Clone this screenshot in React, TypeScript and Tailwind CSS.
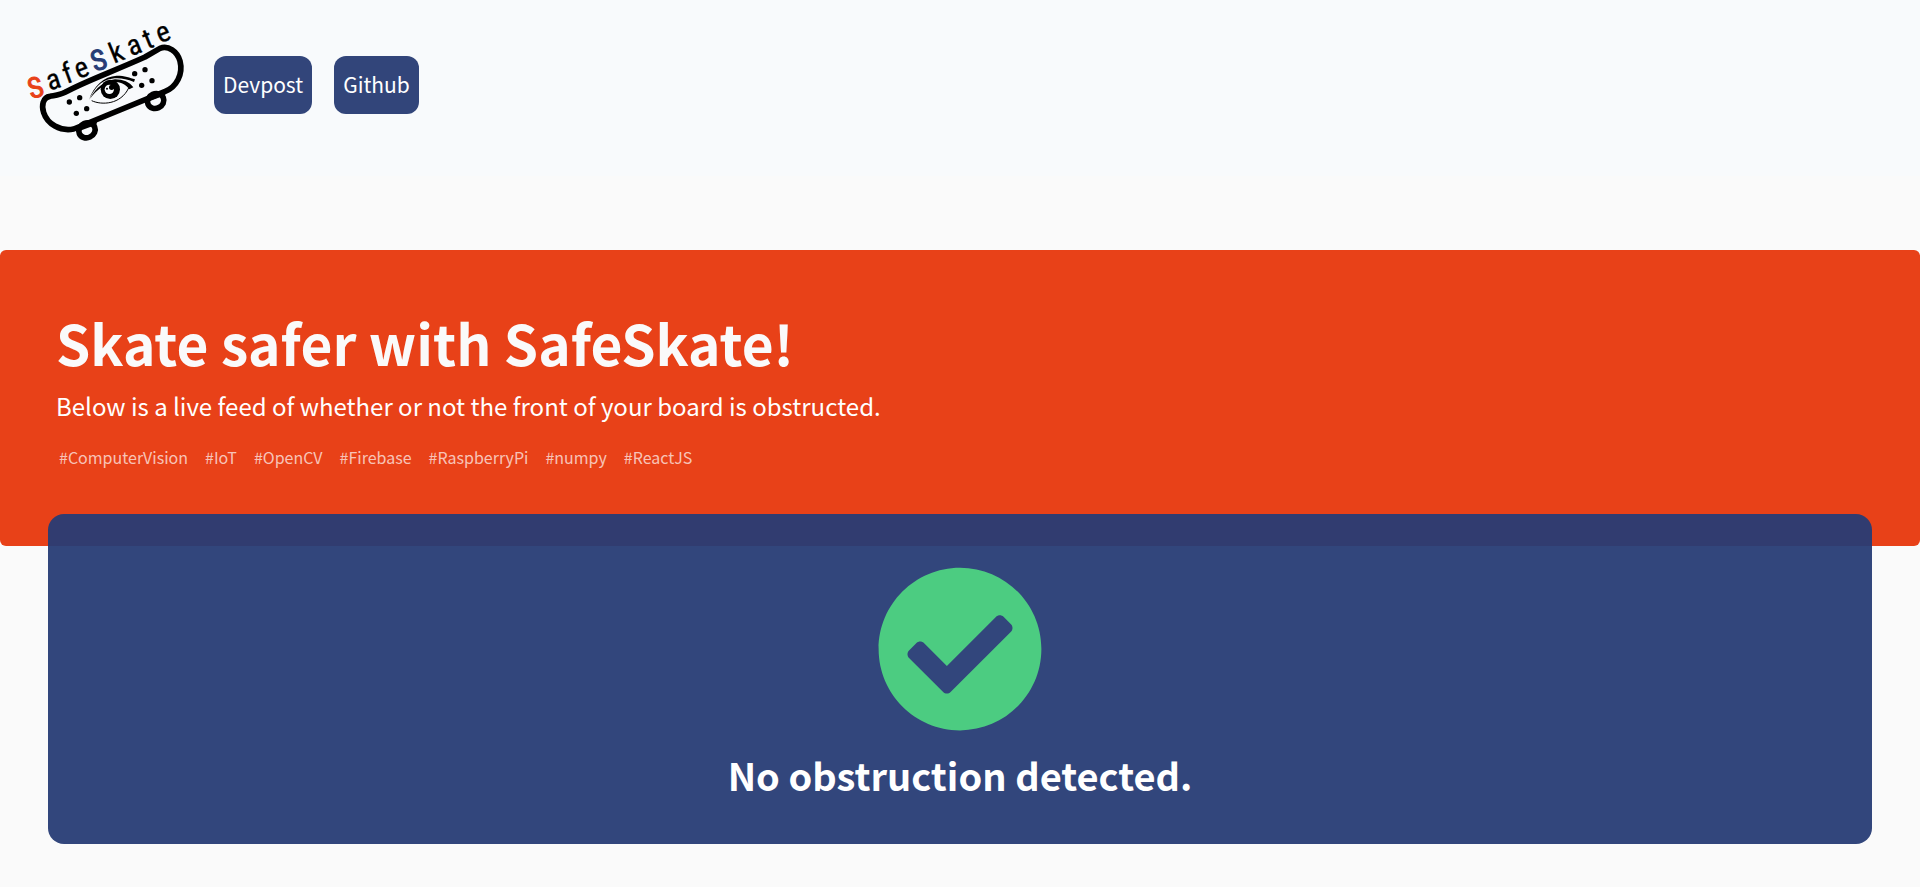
import { FaCheckCircle } from 'react-icons/fa';

const tags = ['#ComputerVision', '#IoT', '#OpenCV', '#Firebase', '#RaspberryPi', '#numpy', '#ReactJS'];

const letters = [
  { c: 'S', x: 115, y: 291, r: -17, f: '#e84118', w: 3 },
  { c: 'a', x: 168, y: 266, r: -18, f: '#000', w: 1 },
  { c: 'f', x: 212, y: 247, r: -20, f: '#000', w: 1 },
  { c: 'e', x: 254, y: 230, r: -22, f: '#000', w: 1 },
  { c: 'S', x: 306, y: 208, r: -20, f: '#273c75', w: 3 },
  { c: 'k', x: 360, y: 184, r: -22, f: '#000', w: 1 },
  { c: 'a', x: 412, y: 162, r: -22, f: '#000', w: 1 },
  { c: 't', x: 454, y: 144, r: -22, f: '#000', w: 1 },
  { c: 'e', x: 499, y: 123, r: -22, f: '#000', w: 1 },
];

const bolts = [
  [208, 306], [239, 293], [260, 326], [229, 340],
  [404, 221], [435, 209], [456, 242], [425, 256],
];

function Logo() {
  return (
    <svg viewBox="0 0 660 480" className="h-40 w-[220px]" role="img" aria-label="SafeSkate">
      {letters.map((l, i) => (
        <text
          key={i}
          transform={`translate(${l.x} ${l.y}) rotate(${l.r})`}
          fontSize="86"
          fill={l.f}
          stroke={l.f}
          strokeWidth={l.w}
          textAnchor="middle"
          className="font-['Liberation_Sans_Narrow','Roboto_Condensed','DejaVu_Sans_Condensed',sans-serif]"
        >
          {l.c}
        </text>
      ))}
      <g fill="none" stroke="#000" strokeWidth="17" strokeLinejoin="round" strokeLinecap="round">
        <path d="M150 289C128 292 124 318 131 338C142 372 180 395 221 387L494 275C530 262 550 222 540 183C532 155 505 135 480 145L435 171C340 214 250 246 195 277C180 285 165 286 150 289Z" />
        <ellipse cx="261" cy="391" rx="25" ry="22" transform="rotate(-24 261 391)" />
        <ellipse cx="467" cy="303" rx="25" ry="22" transform="rotate(-24 467 303)" />
      </g>
      <path d="M226 388L292 362L289 374L236 394ZM434 302L497 276L495 286L442 306Z" />
      {bolts.map(([x, y]) => (
        <circle key={`${x}-${y}`} cx={x} cy={y} r="8" />
      ))}
      <path d="M267 300C280 258 312 229 350 227C375 227 390 233 405 238L402 246C370 233 345 232 320 240C295 250 278 275 267 300Z" />
      <path d="M270 296C288 262 315 242 345 238C370 238 389 246 400 262L388 268C377 252 362 246 345 246C315 250 290 270 270 296Z" />
      <path d="M275 302C305 316 362 314 386 264" fill="none" stroke="#000" strokeWidth="3" />
      <circle cx="331" cy="268" r="29" />
      <circle cx="328" cy="268" r="14" fill="#f8fafc" />
      <circle cx="335" cy="262" r="8" />
      <circle cx="321" cy="266" r="3" />
    </svg>
  );
}

export default function App() {
  return (
    <div className="min-h-screen bg-[#fafafa] font-['Noto_Sans_CJK_JP',sans-serif] text-white">
      <header className="flex h-[176px] items-start bg-[#f8fafc]">
        <a href="#home" className="shrink-0"><Logo /></a>
        <nav className="mt-14 -ml-1.5 flex gap-[22px] text-[21px]">
          <a href="#devpost" className="flex h-[58px] items-center rounded-xl bg-[#32457a] px-[9px]">Devpost</a>
          <a href="#github" className="flex h-[58px] items-center rounded-xl bg-[#32457a] px-[9px]">Github</a>
        </nav>
      </header>
      <main className="pt-[74px] pb-11">
        <section className="rounded-md bg-[#e84118] px-14 pt-[57px] pb-[77px]">
          <h1 className="text-[55px] leading-[70px] font-semibold text-[#fafafa]">Skate safer with SafeSkate!</h1>
          <p className="mt-2 text-2xl leading-[42px]">Below is a live feed of whether or not the front of your board is obstructed.</p>
          <ul className="mt-[18px] flex flex-wrap gap-x-[17px] px-[3px] text-base leading-6 text-white/70">
            {tags.map((t) => <li key={t}>{t}</li>)}
          </ul>
        </section>
        <section className="relative mx-12 -mt-8 flex flex-col items-center rounded-2xl bg-[#273c75]/95 pt-[51px] pb-[39px]">
          <FaCheckCircle className="size-[168px] text-[#4ccc81]" />
          <h2 className="mt-3 text-[38px] leading-[60px] font-semibold">No obstruction detected.</h2>
        </section>
      </main>
    </div>
  );
}
